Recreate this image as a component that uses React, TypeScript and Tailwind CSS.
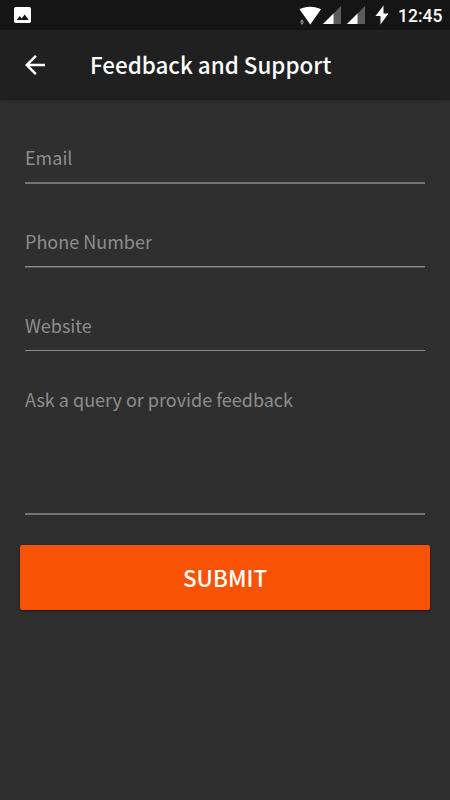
import React from 'react';

const fields = [
  { label: 'Email', line: 'border-b-2 border-[#737575]' },
  { label: 'Phone Number', line: 'mb-[1px] h-[83px] border-b border-[#8b8d8d] shadow-[0_1px_0_#555555]' },
  { label: 'Website', line: 'mb-[1px] h-[83px] border-b border-[#8b8d8d]' },
];

function SignalIcon() {
  return (
    <svg width="18" height="18" viewBox="0 0 18 18">
      <path d="M18 0V18H0z" fill="#5c5c5c" />
      <path d="M10.5 7.5V18H0z" fill="#fff" />
    </svg>
  );
}

function StatusBar() {
  return (
    <div className="flex h-[30px] items-center bg-[#151515] pl-[14px] pr-[7px] text-white">
      <svg width="17" height="16" viewBox="0 0 17 16" className="mr-auto">
        <rect width="17" height="16" rx="1.8" fill="#fff" />
        <path d="M2.7 13l3-4 2 2.4 3-3.9 4 5.5z" fill="#151515" />
      </svg>
      <svg width="23" height="19" viewBox="0 0 23 19" className="mr-[1px]">
        <path d="M0.5 3.2C6-.2 16.5-.2 22 3.2L11.3 18.5z" fill="#fff" />
        <path d="M1 15.8L3 13.2L5 15.800zM1 16.300H5L3 18.900z" fill="#8c8c8c" />
      </svg>
      <SignalIcon />
      <span className="w-[6px]" />
      <SignalIcon />
      <svg width="14" height="20" viewBox="0 0 14 20" className="ml-[10px] mr-[9px]">
        <path d="M8.5 0.5L0.5 11H5.5V19.5L13.5 8.5H8.5z" fill="#fff" />
      </svg>
      <span className="w-[45px] whitespace-nowrap pt-[1px] font-[Roboto,sans-serif] text-[17.5px] font-medium leading-[20px]">12:45</span>
    </div>
  );
}

function Header() {
  return (
    <header className="relative flex h-[70px] items-center bg-[#202020] pl-[25px] text-white shadow-[0_2px_4px_rgba(0,0,0,0.15)]">
      <button aria-label="Back">
        <svg width="20" height="20" viewBox="4 4 16 16" fill="#fff">
          <path d="M20 11H7.83l5.59-5.59L12 4l-8 8 8 8 1.410-1.410L7.83 13H20v-2z" />
        </svg>
      </button>
      <h1 className="ml-[45px] whitespace-nowrap pb-[2px] text-[22.4px] font-medium leading-[36px]">Feedback and Support</h1>
    </header>
  );
}

export default function App() {
  return (
    <div className="flex h-[800px] w-[450px] flex-col overflow-hidden bg-[#2f2f2f] font-['Noto_Sans_CJK_SC','Noto_Sans',sans-serif]">
      <StatusBar />
      <Header />

      <form className="flex flex-col px-5">
        {fields.map(({ label, line }) => (
          <div key={label} className={line + ' mx-[5px] flex min-h-[83px] items-end text-[18px] leading-[30px] text-[#8d8d8d] first:h-[84px]'}>
            <span className="pb-[10px]">{label}</span>
          </div>
        ))}
        <div className="mx-[5px] h-[163px] border-b-2 border-[#737575] pt-[32px] text-[18px] leading-[30px] text-[#8d8d8d]">
          Ask a query or provide feedback
        </div>

        <button
          type="button"
          className="mt-[30px] h-[65px] rounded-[2px] bg-[#f85305] pb-[2px] text-[22.4px] font-medium leading-[36px] text-white shadow-[0_1px_3px_rgba(0,0,0,0.6)]"
        >
          SUBMIT
        </button>
      </form>
    </div>
  );
}
